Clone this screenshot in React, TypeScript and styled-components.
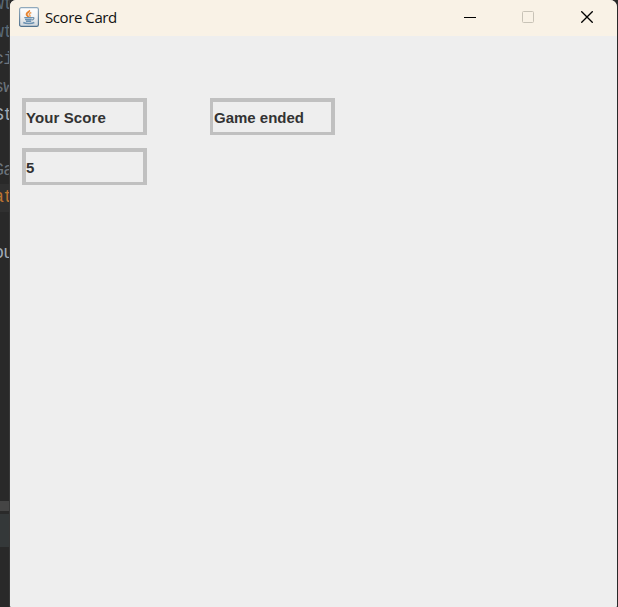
import React from 'react';
import styled, { createGlobalStyle } from 'styled-components';

const GlobalStyle = createGlobalStyle`
  * { box-sizing: border-box; }
  body { margin: 0; background: #262626; overflow: hidden; }
`;

const Desktop = styled.div`
  display: flex;
  width: 618px;
  height: 607px;
  overflow: hidden;
  background: #292929;
`;

const Editor = styled.div`
  width: 10px;
  flex: none;
  display: flex;
  flex-direction: column;
  overflow: hidden;
  border-right: 1px solid #383838;
`;

const CodeLine = styled.div<{ $color?: string; $active?: boolean }>`
  height: 27.6px;
  flex: none;
  display: flex;
  justify-content: flex-end;
  align-items: center;
  white-space: pre;
  font: 17.5px/27px 'Liberation Mono', monospace;
  letter-spacing: -0.8px;
  color: ${(p) => p.$color ?? '#6c747c'};
  background: ${(p) => (p.$active ? '#303030' : 'transparent')};
`;

const CodeText = styled.span`
  margin-right: -4px;
`;

const CodeArea = styled.div`
  height: 501px;
  flex: none;
  overflow: hidden;
`;

const CodeFlow = styled.div`
  margin-top: -9px;
`;

const Divider = styled.div`
  height: 10px;
  background: #454545;
  flex: none;
`;

const ToolStrip = styled.div`
  height: 36px;
  flex: none;
  border-top: 3px solid #2a2a2a;
  background: #343839;
`;

const AppWindow = styled.div`
  width: 607px;
  flex: none;
  display: flex;
  flex-direction: column;
  background: #eeeeee;
  border-radius: 6px 7px 1px 1px;
  overflow: hidden;
`;

const TitleBar = styled.header`
  height: 36px;
  flex: none;
  display: flex;
  align-items: center;
  padding: 0 1px 3px 9px;
  background: #f9f2e6;
`;

const JavaIcon = styled.svg`
  display: block;
  width: 20px;
  height: 20px;
`;

const Title = styled.h1`
  margin: 0 auto 0 6px;
  font: 400 15px/20px 'Open Sans', 'Segoe UI', sans-serif;
  letter-spacing: -0.42px;
  color: #111;
`;

const WindowButton = styled.button<{ $muted?: boolean }>`
  width: 58.5px;
  height: 33px;
  padding: 0;
  border: 0;
  background: none;
  display: grid;
  place-items: center;
  color: ${(p) => (p.$muted ? '#c8c3b7' : '#000')};
  svg { display: block; }
`;

const Content = styled.main`
  padding: 62px 12px;
  display: grid;
  grid-template-columns: 125px 125px;
  grid-auto-rows: 37px;
  gap: 13px 63px;
`;

const ScoreLabel = styled.div<{ $thinLeft?: boolean }>`
  border: 4px solid #c0c0c0;
  border-bottom-width: 3px;
  border-left-width: ${(p) => (p.$thinLeft ? 3 : 4)}px;
  padding: 2px 0 0 ${(p) => (p.$thinLeft ? 1 : 0)}px;
  display: flex;
  align-items: center;
  white-space: nowrap;
  font: bold 15px/18px 'Liberation Sans', Arial, sans-serif;
  letter-spacing: ${(p) => (p.$thinLeft ? 0 : 0.1)}px;
  color: #333333;
`;

const code: { text: string; color?: string; active?: boolean }[] = [
  { text: 'wt', color: '#596977' },
  { text: 'wt', color: '#596977' },
  { text: 'ci' },
  { text: 'sw' },
  { text: 'St', color: '#a0aab5' },
  { text: '' },
  { text: 'Ga' },
  { text: 'at', color: '#bd7432', active: true },
  { text: '' },
  { text: 'ou', color: '#a0aab5' },
];

export default function App() {
  return (
    <>
      <GlobalStyle />
      <Desktop>
        <Editor>
          <CodeArea>
            <CodeFlow>
              {code.map((line, i) => (
                <CodeLine key={i} $color={line.color} $active={line.active}>
                  <CodeText>{line.text}</CodeText>
                </CodeLine>
              ))}
            </CodeFlow>
          </CodeArea>
          <Divider />
          <ToolStrip />
        </Editor>
        <AppWindow>
          <TitleBar>
            <JavaIcon viewBox="0 0 20 20" fill="none">
              <defs>
                <linearGradient id="tile" x1="0" y1="0" x2="0" y2="1">
                  <stop offset="0" stopColor="#fff" />
                  <stop offset=".45" stopColor="#f4f5f6" />
                  <stop offset="1" stopColor="#cfd6dc" />
                </linearGradient>
                <linearGradient id="rim" x1="0" y1="0" x2="0" y2="1">
                  <stop offset="0" stopColor="#91aabd" />
                  <stop offset="1" stopColor="#52738f" />
                </linearGradient>
              </defs>
              <rect x=".6" y=".6" width="18.8" height="18.8" rx="1.7" fill="url(#tile)" stroke="url(#rim)" strokeWidth="1.2" />
              <path d="M10.2 3.2c1 1.6-3 2.5-2.6 4.3.2 1 1.6 1.4 1.5 2.5" stroke="#e8832f" strokeWidth="1.9" />
              <path d="M12.3 5.5c-2.4 1-2.4 1.7-1.5 2.7.5.6.2 1.2-.3 1.6" stroke="#eda05e" strokeWidth="1.5" />
              <path d="M5.3 10.6h7.9M6 12.5h6.7M7 14.2h5.2" stroke="#6b91b1" strokeWidth="1.4" />
              <path d="M13 10.6c2.7-.7 2.4 2-.3 2.5" stroke="#7796af" strokeWidth="1.2" />
              <path d="M4.3 15.5c2.7 1.3 8.5 1.2 11 0" stroke="#6b91b1" strokeWidth="1.5" />
            </JavaIcon>
            <Title>Score Card</Title>
            <WindowButton aria-label="Minimize">
              <svg width="12" height="12"><path d="M0 6.5h12" stroke="currentColor" /></svg>
            </WindowButton>
            <WindowButton $muted disabled aria-label="Maximize">
              <svg width="12" height="12"><rect x=".5" y=".5" width="11" height="11" rx="1" fill="none" stroke="currentColor" /></svg>
            </WindowButton>
            <WindowButton aria-label="Close">
              <svg width="12" height="12"><path d="M.3.3l11.4 11.4M11.7.3L.3 11.7" stroke="currentColor" strokeWidth="1.35" /></svg>
            </WindowButton>
          </TitleBar>
          <Content>
            <ScoreLabel>Your Score</ScoreLabel>
            <ScoreLabel $thinLeft>Game ended</ScoreLabel>
            <ScoreLabel>5</ScoreLabel>
          </Content>
        </AppWindow>
      </Desktop>
    </>
  );
}
